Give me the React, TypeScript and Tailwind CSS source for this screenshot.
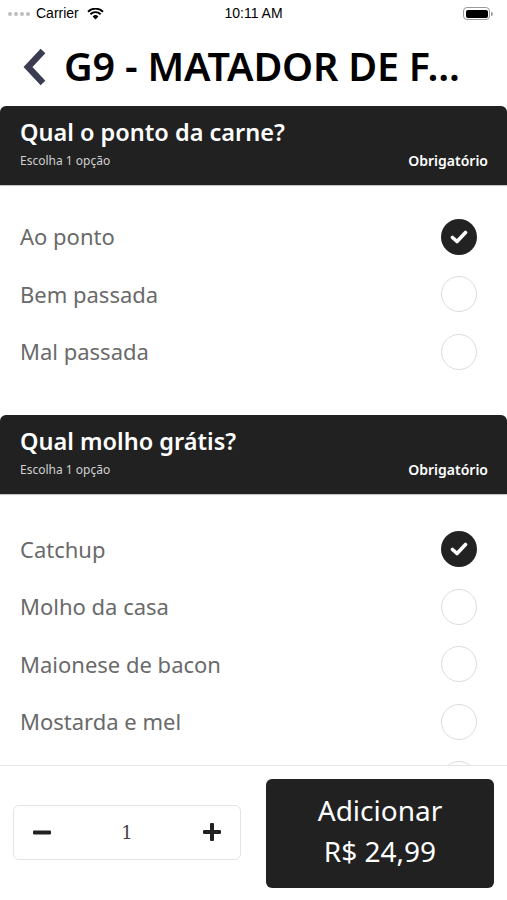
import React from "react";

const font = { fontFamily: '"Noto Sans", "Open Sans", sans-serif' };

function Check({ checked }: { checked: boolean }) {
  if (checked) {
    return (
      <div className="w-[36px] h-[36px] rounded-full bg-[#222222] flex items-center justify-center">
        <svg width="18" height="14" viewBox="0 0 18 14">
          <path d="M2.5 7.5 L7 11.5 L15.5 2.5" fill="none" stroke="white" strokeWidth="3.6" strokeLinecap="round" strokeLinejoin="round" />
        </svg>
      </div>
    );
  }
  return <div className="w-[36px] h-[36px] rounded-full border-[1.5px] border-[#dcdcdc] bg-white" />;
}

function Section({
  title,
  options,
  selected,
  extraCircle,
  listClass,
}: {
  title: string;
  options: string[];
  selected: number;
  extraCircle?: boolean;
  listClass: string;
}) {
  return (
    <div className="flex flex-col">
      <div className="bg-[#212121] rounded-t-[6px] h-[79px] pl-[20px] pr-[19px] pt-[10px] flex flex-col shadow-[0_1px_1px_rgba(0,0,0,0.25)]">
        <div className="text-white text-[23.5px] font-semibold leading-[32px]">{title}</div>
        <div className="flex items-center justify-between mt-[5px]">
          <span className="text-[#d0d0d0] text-[12px] leading-[16px]">Escolha 1 opção</span>
          <span className="text-white text-[14px] font-semibold leading-[16px]">Obrigatório</span>
        </div>
      </div>
      <div className={listClass}>
        {options.map((o, i) => (
          <div key={o} className="h-[57.5px] flex items-center justify-between pl-[20px] pr-[30px]">
            <span className="text-[#6a6a6a] text-[22px]">{o}</span>
            <Check checked={i === selected} />
          </div>
        ))}
        {extraCircle && (
          <div className="h-[57.5px] flex items-center justify-end pl-[20px] pr-[30px]">
            <Check checked={false} />
          </div>
        )}
      </div>
    </div>
  );
}

export default function App() {
  return (
    <div className="w-[507px] h-[900px] bg-white flex flex-col overflow-hidden relative" style={font}>
      {/* status bar */}
      <div className="h-[27px] flex items-center justify-between px-[8px] relative shrink-0" style={{ fontFamily: '"Liberation Sans", sans-serif' }}>
        <div className="flex items-center gap-[4px]">
          <div className="flex gap-[2px]">
            {[0, 1, 2, 3].map((i) => (
              <div key={i} className="w-[4px] h-[4px] rounded-full bg-[#bdbdbd]" />
            ))}
          </div>
          <span className="text-[14px] text-black ml-[2px]">Carrier</span>
          <svg width="17" height="12" viewBox="0 0 17 12" className="ml-[4px]">
            <path d="M8.5 11.5 L5.6 8.4 A4.2 4.2 0 0 1 11.4 8.4 Z" fill="black" />
            <path d="M3.4 6.2 A7.3 7.3 0 0 1 13.6 6.2" fill="none" stroke="black" strokeWidth="1.9" />
            <path d="M1 3.7 A10.8 10.8 0 0 1 16 3.7" fill="none" stroke="black" strokeWidth="1.9" />
          </svg>
        </div>
        <span className="absolute left-1/2 -translate-x-1/2 text-[14px] text-black">10:11 AM</span>
        <div className="flex items-center mr-[6px]">
          <div className="w-[27px] h-[13px] rounded-[4px] border border-[#9a9a9a] p-[1.5px]">
            <div className="w-full h-full rounded-[2px] bg-black" />
          </div>
          <div className="w-[2px] h-[4px] bg-[#9a9a9a] rounded-r-sm ml-[1px]" />
        </div>
      </div>
      {/* title */}
      <div className="h-[79px] flex items-center pl-[22px] shrink-0">
        <svg width="26" height="38" viewBox="0 0 26 38">
          <path d="M21 3 L6 19 L21 35" fill="none" stroke="#3a3d52" strokeWidth="6.5" strokeLinejoin="miter" />
        </svg>
        <span className="ml-[16px] text-[39.5px] font-semibold text-black leading-none tracking-[-0.2px]">G9 - MATADOR DE F...</span>
      </div>
      {/* content */}
      <div className="flex-1 overflow-hidden">
        <Section
          title="Qual o ponto da carne?"
          options={["Ao ponto", "Bem passada", "Mal passada"]}
          selected={0}
          listClass="flex flex-col pt-[23px] pb-[34px]"
        />
        <Section
          title="Qual molho grátis?"
          options={["Catchup", "Molho da casa", "Maionese de bacon", "Mostarda e mel"]}
          selected={0}
          extraCircle
          listClass="flex flex-col pt-[27px] pb-[32px]"
        />
      </div>
      {/* footer */}
      <div className="h-[135px] shrink-0 border-t border-[#e6e6e6] bg-white flex items-center px-[13px] gap-[25px]">
        <div className="w-[228px] h-[55px] border border-[#e4e4e4] rounded-[6px] flex items-center justify-between px-[19px] mt-[-2px]">
          <svg width="18" height="18" viewBox="0 0 18 18">
            <rect x="0" y="7.5" width="18" height="4" rx="1" fill="#222" />
          </svg>
          <span className="text-[#444] text-[18px]" style={{ fontFamily: '"DejaVu Serif", serif' }}>1</span>
          <svg width="18" height="18" viewBox="0 0 18 18">
            <rect x="0" y="7" width="18" height="4" rx="1" fill="#222" />
            <rect x="7" y="0" width="4" height="18" rx="1" fill="#222" />
          </svg>
        </div>
        <div className="w-[228px] h-[109px] bg-[#212121] rounded-[6px] flex flex-col items-center justify-center pb-[4px]">
          <span className="text-white text-[28px] leading-[41px]">Adicionar</span>
          <span className="text-white text-[28px] leading-[41px]">R$ 24,99</span>
        </div>
      </div>
    </div>
  );
}
